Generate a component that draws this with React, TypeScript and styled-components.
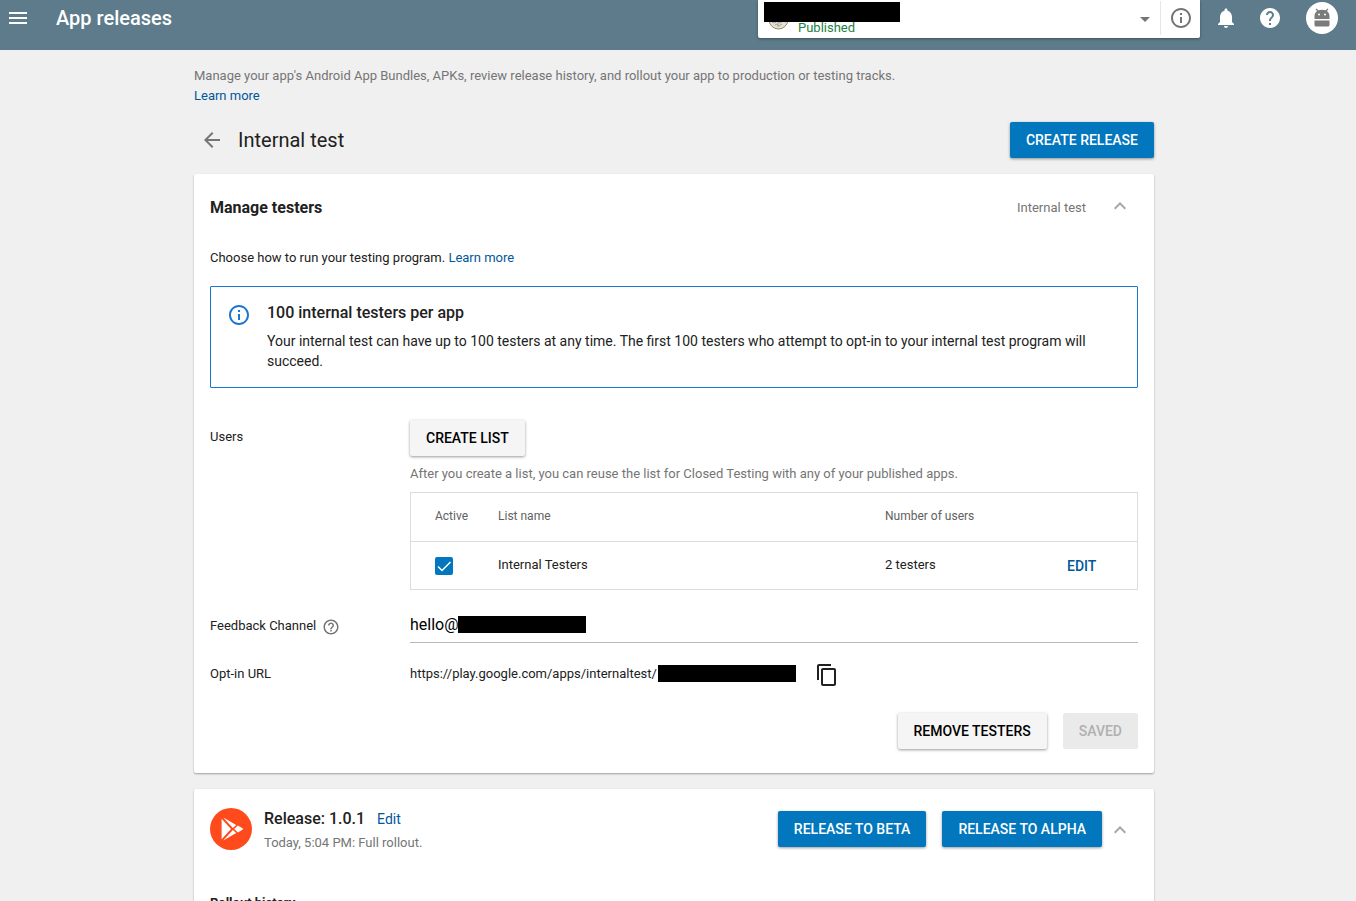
import React, { useState } from 'react';
import styled, { createGlobalStyle, css } from 'styled-components';

const GlobalStyle = createGlobalStyle`
  *, *::before, *::after { box-sizing: border-box; }
  body {
    margin: 0;
    background: #f0f0f0;
    color: #212121;
    font-family: Roboto, "Liberation Sans", sans-serif;
    font-size: 13px;
    line-height: 20px;
  }
  button, input { font-family: inherit; }
  h1, h2, h3, p { margin: 0; }
`;

const paths = {
  menu: 'M3 18h18v-2H3v2zm0-5h18v-2H3v2zm0-7v2h18V6H3z',
  info: 'M11 17h2v-6h-2v6zm1-15C6.48 2 2 6.48 2 12s4.48 10 10 10 10-4.48 10-10S17.52 2 12 2zm0 18c-4.41 0-8-3.59-8-8s3.59-8 8-8 8 3.59 8 8-3.59 8-8 8zM11 9h2V7h-2v2z',
  bell: 'M12 22c1.1 0 2-.9 2-2h-4c0 1.1.89 2 2 2zm6-6v-5c0-3.07-1.64-5.64-4.5-6.32V4c0-.83-.67-1.5-1.5-1.5s-1.5.67-1.5 1.5v.68C7.63 5.36 6 7.92 6 11v5l-2 2v1h16v-1l-2-2z',
  help: 'M12 2C6.48 2 2 6.48 2 12s4.48 10 10 10 10-4.48 10-10S17.52 2 12 2zm1 17h-2v-2h2v2zm2.07-7.75l-.9.92C13.45 12.9 13 13.5 13 15h-2v-.5c0-1.1.45-2.1 1.17-2.83l1.24-1.26c.37-.36.59-.86.59-1.41 0-1.1-.9-2-2-2s-2 .9-2 2H8c0-2.21 1.79-4 4-4s4 1.79 4 4c0 .88-.36 1.68-.93 2.25z',
  helpOutline: 'M11 18h2v-2h-2v2zm1-16C6.48 2 2 6.48 2 12s4.48 10 10 10 10-4.48 10-10S17.52 2 12 2zm0 18c-4.41 0-8-3.59-8-8s3.59-8 8-8 8 3.59 8 8-3.59 8-8 8zm0-14c-2.21 0-4 1.79-4 4h2c0-1.1.9-2 2-2s2 .9 2 2c0 2-3 1.75-3 5h2c0-2.25 3-2.5 3-5 0-2.21-1.79-4-4-4z',
  back: 'M20 11H7.83l5.59-5.59L12 4l-8 8 8 8 1.41-1.41L7.83 13H20v-2z',
  up: 'M12 8l-6 6 1.41 1.41L12 10.83l4.59 4.58L18 14z',
  down: 'M7 10l5 5 5-5z',
  copy: 'M16 1H4c-1.1 0-2 .9-2 2v14h2V3h12V1zm3 4H8c-1.1 0-2 .9-2 2v14c0 1.1.9 2 2 2h11c1.1 0 2-.9 2-2V7c0-1.1-.9-2-2-2zm0 16H8V7h11v14z',
};

const Svg = styled.svg`
  display: block;
  flex: none;
  fill: currentColor;
`;

function Icon({ name, size = 24 }: { name: keyof typeof paths; size?: number }) {
  return (
    <Svg viewBox="0 0 24 24" width={size} height={size} aria-hidden="true">
      <path d={paths[name]} />
    </Svg>
  );
}

const Shell = styled.div`
  height: 100vh;
  overflow-y: auto;
  scrollbar-width: none;
`;

const TopBar = styled.header`
  display: flex;
  height: 50px;
  padding: 0 18px 14px 6px;
  background: #5d7b8a;
  color: #fff;
`;

const BarTitle = styled.h1`
  flex: 1;
  margin-left: 26px;
  font-size: 20px;
  font-weight: 500;
  line-height: 36px;
`;

const IconButton = styled.button<{ $tone?: string }>`
  display: grid;
  place-items: center;
  padding: 0;
  border: 0;
  background: none;
  color: ${(p) => p.$tone ?? 'inherit'};
  cursor: pointer;
`;

const AppPicker = styled.div`
  position: relative;
  display: flex;
  flex: 0 1 442px;
  height: 38px;
  border-radius: 0 0 2px 2px;
  background: #fff;
  color: #757575;
  box-shadow: 0 1px 3px rgba(0, 0, 0, 0.35);
`;

const PickerButton = styled.button`
  display: flex;
  flex: 1;
  align-items: center;
  gap: 9px;
  padding: 0 3px 0 10px;
  border: 0;
  background: none;
  color: inherit;
`;

const Status = styled.span`
  flex: 1;
  align-self: flex-end;
  color: #1e8043;
  font-size: 13px;
  line-height: 20px;
  text-align: left;
`;

const PickerInfo = styled(IconButton)`
  width: 40px;
  height: 34px;
  margin-top: 1px;
  border-left: 1px solid #e6e6e6;
`;

const Redaction = styled.span<{ $w: number; $h: number }>`
  display: inline-block;
  width: ${(p) => p.$w}px;
  height: ${(p) => p.$h}px;
  background: #000;
`;

const NameRedaction = styled(Redaction)`
  position: absolute;
  top: 2px;
  left: 6px;
`;

const BarActions = styled.div`
  display: flex;
  align-items: center;
  gap: 20px;
  margin-left: 14px;
`;

const Avatar = styled(IconButton)`
  width: 32px;
  height: 32px;
  margin-left: 4px;
  border-radius: 50%;
  background: #fff;
  color: #7b7b7b;
`;

const Main = styled.main`
  padding: 16px 8px 16px 0;
`;

const Column = styled.div`
  display: flex;
  flex-direction: column;
  gap: 16px;
  max-width: 960px;
  margin: 0 auto;
`;

const Intro = styled.p`
  color: #757575;
`;

const Link = styled.a`
  color: #01579b;
  text-decoration: none;
`;

const BlockLink = styled(Link)`
  display: table;
`;

const EditLink = styled(Link)`
  font-size: 14px;
  line-height: 24px;
`;

const TitleRow = styled.div`
  display: flex;
  align-items: center;
  gap: 14px;
  padding-left: 6px;
`;

const PageTitle = styled.h2`
  flex: 1;
  font-size: 20px;
  font-weight: 400;
  line-height: 24px;
`;

const Button = styled.button<{ $kind?: 'primary' | 'plain' }>`
  height: 36px;
  padding: 0 16px;
  border: 0;
  border-radius: 2px;
  font-size: 14px;
  font-weight: 500;
  line-height: 36px;
  white-space: nowrap;
  cursor: pointer;
  ${(p) =>
    p.$kind === 'primary'
      ? css`
          background: #0277bd;
          color: #fff;
        `
      : css`
          background: #f5f5f5;
          color: #000;
        `}
  box-shadow: 0 1px 3px rgba(0, 0, 0, 0.4);
  &:disabled {
    background: #eaeaea;
    color: #b0b0b0;
    box-shadow: none;
    cursor: default;
  }
`;

const Card = styled.section<{ $top: number }>`
  padding: ${(p) => p.$top}px 16px 24px;
  border-radius: 2px;
  background: #fff;
  box-shadow: 0 1px 2px rgba(0, 0, 0, 0.35);
`;

const CardHeader = styled.div`
  display: flex;
  align-items: center;
`;

const CardTitle = styled.h3`
  flex: 1;
  font-size: 16px;
  font-weight: 700;
  line-height: 28px;
`;

const Muted = styled.span`
  color: #757575;
`;

const Toggle = styled(IconButton)`
  width: 36px;
  height: 24px;
  margin: 0 0 4px 16px;
`;

const Lead = styled.p`
  margin-top: 26px;
`;

const Notice = styled.div`
  display: flex;
  gap: 16px;
  margin-top: 18px;
  padding: 16px;
  border: 1px solid #1976d2;
  border-radius: 1px;
  color: #1976d2;
`;

const NoticeBody = styled.div`
  color: #212121;
  font-size: 14px;
`;

const NoticeTitle = styled.h4`
  margin: 0 0 8px;
  font-size: 16px;
  font-weight: 500;
  line-height: 20px;
`;

const Form = styled.div`
  display: grid;
  grid-template-columns: 200px minmax(0, 1fr);
  margin-top: 32px;
`;

const FieldLabel = styled.div<{ $top: number }>`
  display: flex;
  align-items: flex-start;
  gap: 6px;
  padding-top: ${(p) => p.$top}px;
`;

const HelpButton = styled(IconButton)`
  margin-top: 2px;
`;

const Hint = styled.p`
  margin: 8px 0;
  color: #757575;
`;

const Table = styled.table`
  width: 100%;
  border: 1px solid #dcdcdc;
  border-spacing: 0;
  table-layout: fixed;
`;

const Col = styled.col<{ $w?: number }>`
  width: ${(p) => (p.$w ? `${p.$w}px` : 'auto')};
`;

const HeadCell = styled.th`
  height: 49px;
  padding: 0 0 2px;
  border-bottom: 1px solid #dcdcdc;
  color: #616161;
  font-size: 12px;
  font-weight: 400;
  text-align: left;
  &:first-child { padding-left: 24px; }
`;

const Cell = styled.td`
  height: 47px;
  padding: 0 0 2px;
  &:first-child { padding: 0 0 0 24px; }
  &:last-child { padding: 0; }
`;

const CheckWrap = styled.label`
  display: grid;
  width: 18px;
  height: 18px;
  color: #fff;
  & > * { grid-area: 1 / 1; }
`;

const CheckInput = styled.input`
  width: 18px;
  height: 18px;
  margin: 0;
  border: 2px solid #757575;
  border-radius: 2px;
  appearance: none;
  &:checked { border-color: #0277bd; background: #0277bd; }
`;

const CheckMark = styled.svg`
  z-index: 1;
  pointer-events: none;
`;

const TextButton = styled.button`
  display: block;
  padding: 0;
  border: 0;
  background: none;
  color: #01579b;
  font-size: 14px;
  font-weight: 500;
  line-height: 20px;
  cursor: pointer;
`;

const InputWrap = styled.div`
  position: relative;
  margin-top: 16px;
`;

const TextInput = styled.input`
  display: block;
  width: 100%;
  height: 37px;
  padding: 0;
  border: 0;
  border-bottom: 1px solid #b9b9b9;
  outline: 0;
  background: none;
  color: #000;
  font-size: 16px;
`;

const InputRedaction = styled(Redaction)`
  position: absolute;
  top: 10px;
  left: 48px;
`;

const UrlRow = styled.div`
  display: flex;
  align-items: center;
  gap: 1px;
  height: 24px;
  margin-top: 18px;
`;

const Url = styled.span`
  padding-top: 2px;
`;

const CopyButton = styled(IconButton)`
  margin: 4px 0 0 18px;
  color: #212121;
`;

const CardActions = styled.div`
  display: flex;
  justify-content: flex-end;
  gap: 16px;
  margin-top: 28px;
`;

const ReleaseText = styled.div`
  flex: 1;
  margin-left: 12px;
  padding-top: 4px;
`;

const ReleaseHeading = styled.div`
  display: flex;
  align-items: center;
  gap: 12px;
`;

const ReleaseTitle = styled.h3`
  font-size: 16px;
  font-weight: 500;
  line-height: 24px;
`;

const ReleaseMeta = styled.p`
  color: #757575;
  line-height: 24px;
`;

const ReleaseActions = styled.div`
  display: flex;
  gap: 16px;
`;

const ReleaseToggle = styled(IconButton)`
  width: 36px;
  height: 24px;
  margin-top: 2px;
`;

const HistoryTitle = styled.h4`
  margin: 38px 0 0;
  font-size: 13px;
  font-weight: 700;
`;

function AppBadge() {
  return (
    <Svg width="21" height="21" viewBox="0 0 21 21" aria-hidden="true">
      <circle cx="10.5" cy="10.5" r="9.5" fill="#e4e0d8" stroke="#a0895c" />
      <path
        d="M4 13l3 1 2-2 3 2 3-2 3 1M7 16l2-1 2 2 3-2M10 12v6"
        fill="none"
        stroke="#a9a49c"
      />
    </Svg>
  );
}

function AndroidHead() {
  return (
    <Svg width="18" height="20" viewBox="0 0 18 20" aria-hidden="true">
      <path d="M1.500 11V8c0-2 1-4 2.600-5L2.500 1.200l.8-.7L5.400 2.300C7.600 1.500 10.400 1.500 12.600 2.300L14.700.5l.8.7L13.900 3C15.500 4 16.500 6 16.500 8v3z" />
      <path d="M1.500 12.500h15v4.500a1.500 1.500 0 0 1-1.500 1.500H3A1.500 1.500 0 0 1 1.500 17z" />
      <circle cx="6" cy="6.500" r="1" fill="#fff" />
      <circle cx="12" cy="6.500" r="1" fill="#fff" />
    </Svg>
  );
}

function PlayBadge() {
  return (
    <Svg width="42" height="42" viewBox="0 0 42 42" aria-hidden="true">
      <circle cx="21" cy="21" r="21" fill="#ff4a1c" />
      <g fill="#fff">
        <path d="M11.600 10.800v20.400L21 21z" />
        <path d="M13.200 9.500l13 7.400-3.300 3.200z" />
        <path d="M13.200 32.500l13-7.400-3.300-3.200z" />
        <path d="M24.200 21l3.600-3.400 4.700 2.600c.7.400.7 1.200 0 1.600l-4.700 2.600z" />
      </g>
    </Svg>
  );
}

export default function App() {
  const [active, setActive] = useState(true);
  return (
    <Shell>
      <GlobalStyle />
      <TopBar>
        <IconButton aria-label="Menu"><Icon name="menu" /></IconButton>
        <BarTitle>App releases</BarTitle>
        <AppPicker>
          <PickerButton aria-label="Choose app, Published">
            <AppBadge />
            <Status>Published</Status>
            <Icon name="down" />
          </PickerButton>
          <PickerInfo aria-label="App info"><Icon name="info" /></PickerInfo>
          <NameRedaction $w={136} $h={20} />
        </AppPicker>
        <BarActions>
          <IconButton aria-label="Notifications"><Icon name="bell" /></IconButton>
          <IconButton aria-label="Help"><Icon name="help" /></IconButton>
          <Avatar aria-label="Account"><AndroidHead /></Avatar>
        </BarActions>
      </TopBar>

      <Main>
        <Column>
          <Intro>
            Manage your app's Android App Bundles, APKs, review release history, and rollout your app to production or testing tracks.
            <BlockLink href="#tracks">Learn more</BlockLink>
          </Intro>

          <TitleRow>
            <IconButton aria-label="Back" $tone="#757575"><Icon name="back" /></IconButton>
            <PageTitle>Internal test</PageTitle>
            <Button $kind="primary">CREATE RELEASE</Button>
          </TitleRow>

          <Card $top={20}>
            <CardHeader>
              <CardTitle>Manage testers</CardTitle>
              <Muted>Internal test</Muted>
              <Toggle aria-label="Collapse testers" $tone="#a6a6a6"><Icon name="up" /></Toggle>
            </CardHeader>
            <Lead>
              Choose how to run your testing program. <Link href="#testing">Learn more</Link>
            </Lead>
            <Notice>
              <Icon name="info" />
              <NoticeBody>
                <NoticeTitle>100 internal testers per app</NoticeTitle>
                <p>
                  Your internal test can have up to 100 testers at any time. The first 100 testers who attempt to opt-in to your internal test program will succeed.
                </p>
              </NoticeBody>
            </Notice>

            <Form>
              <FieldLabel $top={7}>Users</FieldLabel>
              <div>
                <Button>CREATE LIST</Button>
                <Hint>After you create a list, you can reuse the list for Closed Testing with any of your published apps.</Hint>
                <Table>
                  <colgroup>
                    <Col $w={87} />
                    <Col />
                    <Col $w={182} />
                    <Col $w={70} />
                  </colgroup>
                  <thead>
                    <tr>
                      <HeadCell>Active</HeadCell>
                      <HeadCell>List name</HeadCell>
                      <HeadCell>Number of users</HeadCell>
                      <HeadCell />
                    </tr>
                  </thead>
                  <tbody>
                    <tr>
                      <Cell>
                        <CheckWrap>
                          <CheckInput
                            type="checkbox"
                            aria-label="Internal Testers active"
                            checked={active}
                            onChange={(e) => setActive(e.target.checked)}
                          />
                          <CheckMark width="18" height="18" viewBox="0 0 18 18" aria-hidden="true">
                            <path d="M3 9.500l4 4L15.500 5" fill="none" stroke="currentColor" strokeWidth="1.500" />
                          </CheckMark>
                        </CheckWrap>
                      </Cell>
                      <Cell>Internal Testers</Cell>
                      <Cell>2 testers</Cell>
                      <Cell><TextButton>EDIT</TextButton></Cell>
                    </tr>
                  </tbody>
                </Table>
              </div>

              <FieldLabel $top={26}>
                <label htmlFor="feedback">Feedback Channel</label>
                <HelpButton aria-label="About feedback channel" $tone="#757575">
                  <Icon name="helpOutline" size={18} />
                </HelpButton>
              </FieldLabel>
              <InputWrap>
                <TextInput id="feedback" defaultValue="hello@" />
                <InputRedaction $w={128} $h={17} />
              </InputWrap>

              <FieldLabel $top={21}>Opt-in URL</FieldLabel>
              <UrlRow>
                <Url>https://play.google.com/apps/internaltest/</Url>
                <Redaction $w={138} $h={17} />
                <CopyButton aria-label="Copy URL"><Icon name="copy" /></CopyButton>
              </UrlRow>
            </Form>

            <CardActions>
              <Button>REMOVE TESTERS</Button>
              <Button disabled>SAVED</Button>
            </CardActions>
          </Card>

          <Card $top={14}>
            <CardHeader>
              <PlayBadge />
              <ReleaseText>
                <ReleaseHeading>
                  <ReleaseTitle>Release: 1.0.1</ReleaseTitle>
                  <EditLink href="#edit">Edit</EditLink>
                </ReleaseHeading>
                <ReleaseMeta>Today, 5:04 PM: Full rollout.</ReleaseMeta>
              </ReleaseText>
              <ReleaseActions>
                <Button $kind="primary">RELEASE TO BETA</Button>
                <Button $kind="primary">RELEASE TO ALPHA</Button>
              </ReleaseActions>
              <ReleaseToggle aria-label="Collapse release" $tone="#a6a6a6"><Icon name="up" /></ReleaseToggle>
            </CardHeader>
            <HistoryTitle>Rollout history</HistoryTitle>
          </Card>
        </Column>
      </Main>
    </Shell>
  );
}
